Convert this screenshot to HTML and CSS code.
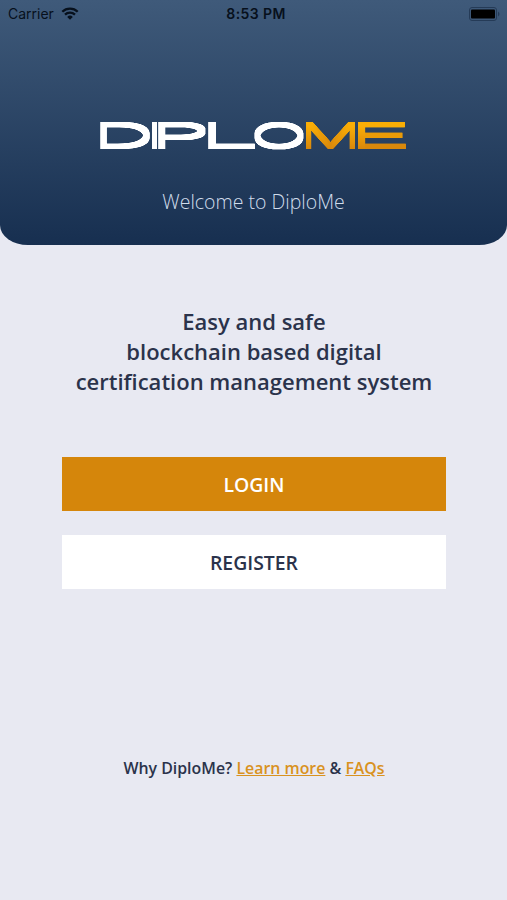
FILE: index.html
```html
<!DOCTYPE html>
<html lang="en">
<head>
    <meta charset="utf-8">
    <meta name="viewport" content="width=device-width, initial-scale=1">
    <title>DiploMe - Welcome</title>
    <link rel="stylesheet" href="styles.css">
</head>
<body>
    <div class="screen">
        <header class="header">
            <div class="status-bar">
                <div class="carrier">
                    <span>Carrier</span>
                    <svg class="wifi" viewBox="0 0 18 13" aria-hidden="true">
                        <path d="M1.3 4.7a11 11 0 0 1 15.4 0" />
                        <path d="M4 7.7a7.2 7.2 0 0 1 10 0" />
                        <path class="wifi-dot" d="M6.2 9.9a4 4 0 0 1 5.6 0L9 12.8z" />
                    </svg>
                </div>
                <span class="time">8:53 PM</span>
                <svg class="battery" viewBox="0 0 32 14" aria-hidden="true">
                    <rect class="battery-case" x="0.5" y="0.5" width="27" height="13" rx="2.5" />
                    <rect x="2" y="2.5" width="24" height="9" rx="1" />
                    <path class="battery-tip" d="M29 4.5q3 2.5 0 5z" />
                </svg>
            </div>
            <svg class="logo" viewBox="0 0 308 29" role="img" aria-label="DiploMe">
                <defs>
                    <linearGradient id="gold" gradientUnits="userSpaceOnUse" x1="0" y1="2" x2="0" y2="27">
                        <stop offset="0%" stop-color="#fbb005" />
                        <stop offset="100%" stop-color="#d6850b" />
                    </linearGradient>
                    <!-- thickens the thin letters evenly -->
                    <filter id="thick" x="-5%" y="-30%" width="110%" height="160%" color-interpolation-filters="sRGB">
                        <feMorphology operator="dilate" radius="1 2" />
                        <feComponentTransfer>
                            <feFuncA type="linear" slope="1.6" />
                        </feComponentTransfer>
                    </filter>
                </defs>
                <g filter="url(#thick)">
                    <text class="logo-white" y="25.5"><tspan x="-7.5" textLength="62" lengthAdjust="spacingAndGlyphs">D</tspan><tspan x="46.7" textLength="15.6" lengthAdjust="spacingAndGlyphs">I</tspan><tspan x="49" textLength="62" lengthAdjust="spacingAndGlyphs">P</tspan><tspan x="98" textLength="62" lengthAdjust="spacingAndGlyphs">L</tspan><tspan x="150.5" textLength="57" lengthAdjust="spacingAndGlyphs">O</tspan></text>
                    <text class="logo-gold" y="25.5"><tspan x="200" textLength="61" lengthAdjust="spacingAndGlyphs">M</tspan><tspan x="247.5" textLength="65" lengthAdjust="spacingAndGlyphs">E</tspan></text>
                </g>
            </svg>
            <p class="welcome">Welcome to DiploMe</p>
        </header>
        <main class="content">
            <h1 class="tagline">Easy and safe<br>blockchain based digital<br>certification management system</h1>
            <div class="buttons">
                <button class="btn btn-login">LOGIN</button>
                <button class="btn btn-register">REGISTER</button>
            </div>
            <p class="links">Why DiploMe? <a href="#">Learn more</a> &amp; <a href="#">FAQs</a></p>
        </main>
    </div>
</body>
</html>
```
FILE: styles.css
```css
* {
    box-sizing: border-box;
}
body {
    margin: 0;
    font-family: 'Open Sans', sans-serif;
    background-color: #e8e9f2;
    color: #2b334b;
}
.screen {
    min-height: 900px;
}
.header {
    height: 245px;
    background: linear-gradient(#3f5a7a, #172f50);
    border-radius: 0 0 28px 28px / 0 0 20px 20px;
    text-align: center;
}
.status-bar {
    display: grid;
    grid-template-columns: 1fr auto 1fr;
    align-items: center;
    height: 27px;
    padding: 0 6px 0 8px;
    font-family: Inter, sans-serif;
    font-size: 14px;
    color: #07101c;
}
.carrier {
    display: flex;
    align-items: center;
    gap: 7px;
}
.wifi {
    width: 18px;
    height: 13px;
    fill: none;
    stroke: #07101c;
    stroke-width: 2.3;
}
.wifi .wifi-dot {
    fill: #07101c;
    stroke: none;
}
.time {
    padding-left: 3px;
    font-weight: 600;
    letter-spacing: 0.4px;
}
.battery {
    width: 32px;
    height: 14px;
    justify-self: end;
    fill: #000;
}
.battery .battery-case {
    fill: none;
    stroke: #253b57;
}
.battery .battery-tip {
    fill: #253b57;
}
.logo {
    display: block;
    width: 308px;
    height: 29px;
    margin: 94px auto 0;
    overflow: visible;
    font-family: Inter, sans-serif;
    font-size: 31px;
    font-weight: 200;
}
.logo-white {
    fill: #fff;
}
.logo-gold {
    fill: url(#gold);
}
.welcome {
    margin: 39px 0 0;
    font-size: 19.5px;
    font-weight: 300;
    line-height: 26px;
    color: #d0dceb;
}
.content {
    padding: 61px 61px 0 62px;
    text-align: center;
}
.tagline {
    margin: 0 -20px;
    font-size: 22px;
    font-weight: 600;
    line-height: 30px;
}
.buttons {
    display: flex;
    flex-direction: column;
    gap: 24px;
    margin-top: 61px;
}
.btn {
    height: 54px;
    border: none;
    padding: 0;
    font-family: inherit;
    font-size: 19.4px;
    font-weight: 600;
    cursor: pointer;
}
.btn-login {
    background-color: #d5860b;
    color: #fff;
}
.btn-register {
    background-color: #fff;
    color: #2b334b;
}
.links {
    margin: 168px 0 0;
    font-size: 15.9px;
    font-weight: 600;
    line-height: 22px;
}
.links a {
    color: #d9921f;
}
```
